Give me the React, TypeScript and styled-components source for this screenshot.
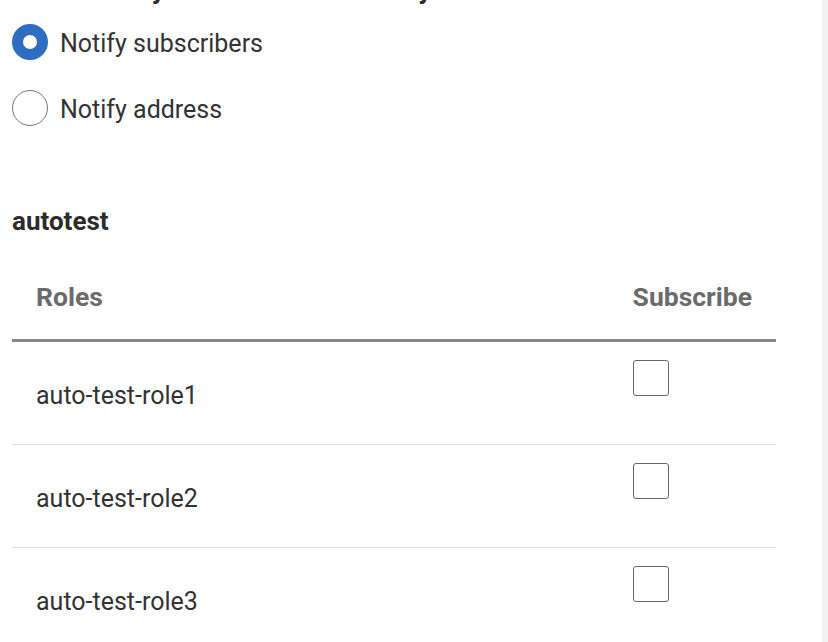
import React, { useState } from "react";
import styled, { createGlobalStyle } from "styled-components";

const GlobalStyle = createGlobalStyle`
  html, body {
    margin: 0;
    padding: 0;
    background: #ffffff;
    overflow: hidden;
  }
  body {
    font-family: Roboto, "Noto Sans", Arial, sans-serif;
    color: #333333;
  }
`;

const roles = ["auto-test-role1", "auto-test-role2", "auto-test-role3"];

const App = () => {
  const [mode, setMode] = useState("subscribers");
  const [checked, setChecked] = useState<Record<string, boolean>>({});

  return (
    <Page>
      <GlobalStyle />
      <Main>
        <Title>Select who you would like to notify</Title>
        <RadioGroup>
          <RadioRow>
            <Radio
              type="radio"
              name="notify"
              checked={mode === "subscribers"}
              onChange={() => setMode("subscribers")}
            />
            <RadioLabel>Notify subscribers</RadioLabel>
          </RadioRow>
          <RadioRow>
            <Radio
              type="radio"
              name="notify"
              checked={mode === "address"}
              onChange={() => setMode("address")}
            />
            <RadioLabel>Notify address</RadioLabel>
          </RadioRow>
        </RadioGroup>

        <GroupName>autotest</GroupName>
        <Table>
          <HeadCell>Roles</HeadCell>
          <HeadCell>Subscribe</HeadCell>
          {roles.map((role) => (
            <React.Fragment key={role}>
              <RoleCell>{role}</RoleCell>
              <CheckCell>
                <Checkbox
                  type="checkbox"
                  checked={!!checked[role]}
                  onChange={() =>
                    setChecked({ ...checked, [role]: !checked[role] })
                  }
                />
              </CheckCell>
            </React.Fragment>
          ))}
        </Table>
      </Main>
      <Gutter />
    </Page>
  );
};
export default App;

const Page = styled.div`
  display: flex;
  height: 100vh;
`;

const Main = styled.div`
  flex: 1;
  padding-left: 12px;
`;

// right edge strip of the page
const Gutter = styled.div`
  width: 6px;
  background: #f1f1f1;
`;

const Title = styled.h2`
  margin: -27px 0 0;
  font-size: 27px;
  line-height: 32px;
  font-weight: 700;
  color: #2b2b2b;
  white-space: nowrap;
`;

const RadioGroup = styled.div`
  display: flex;
  flex-direction: column;
  gap: 30px;
  margin-top: 19px;
`;

const RadioRow = styled.label`
  display: flex;
  align-items: center;
  gap: 12px;
  height: 36px;
`;

const Radio = styled.input`
  appearance: none;
  margin: 0;
  width: 36px;
  height: 36px;
  border-radius: 50%;
  border: 1px solid #767676;
  box-sizing: border-box;
  background: #ffffff;

  &:checked {
    border: 11px solid #2e6dc2;
  }
`;

const RadioLabel = styled.span`
  padding-top: 4px;
  font-size: 25px;
  line-height: 32px;
  color: #333333;
`;

const GroupName = styled.h3`
  margin: 79px 0 20px;
  font-size: 26px;
  line-height: 32px;
  font-weight: 700;
  color: #2b2b2b;
`;

const Table = styled.div`
  display: grid;
  grid-template-columns: 1fr auto;
  width: 764px;
`;

const HeadCell = styled.div`
  padding: 24px 24px 26px;
  font-size: 26.5px;
  line-height: 32px;
  font-weight: 700;
  color: #6b6b6b;
  border-bottom: 3px solid #888888;
`;

const RoleCell = styled.div`
  box-sizing: border-box;
  height: 103px;
  padding: 38px 24px 0;
  font-size: 25px;
  line-height: 32px;
  color: #333333;
  border-bottom: 1px solid #dddddd;
`;

const CheckCell = styled.div`
  box-sizing: border-box;
  height: 103px;
  padding: 18px 24px 0;
  border-bottom: 1px solid #dddddd;
`;

const Checkbox = styled.input`
  appearance: none;
  display: block;
  margin: 0;
  width: 36px;
  height: 36px;
  border: 1px solid #666666;
  border-radius: 3px;
  background: #ffffff;
  box-sizing: border-box;
`;
